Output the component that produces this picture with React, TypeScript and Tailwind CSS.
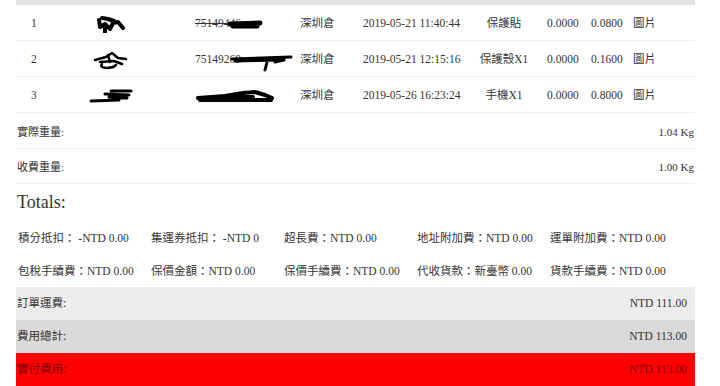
import React from 'react'

const font = { fontFamily: '"Liberation Serif", "Noto Sans CJK TC", serif' }

function Scribble({ d, w, h, sw = 4 }: { d: string; w: number; h: number; sw?: number }) {
  return (
    <svg width={w} height={h} viewBox={`0 0 ${w} ${h}`} className="block">
      <path d={d} fill="none" stroke="#000" strokeWidth={sw} strokeLinecap="round" strokeLinejoin="round" />
    </svg>
  )
}

const rows = [
  {
    no: '1',
    name: <Scribble w={30} h={18} d="M3 5 L4 12 L9 9 L14 14 L17 8 L22 7 L27 13 M6 3 L12 4 L18 6 M9 10 L9 17" />,
    track: (
      <div className="flex items-center">
        <span className="line-through">75149446</span>
        <div className="-ml-[14px]">
          <Scribble w={36} h={12} sw={5} d="M3 6 L33 5 M6 8 L30 8" />
        </div>
      </div>
    ),
    date: '2019-05-21 11:40:44',
    product: '保護貼',
    w1: '0.0000',
    w2: '0.0800',
  },
  {
    no: '2',
    name: <Scribble w={38} h={20} sw={2.5} d="M3 10 L14 7 L20 3 L26 8 L34 9 M8 12 L22 11 L30 14 M10 14 C6 19 20 19 24 15 M16 5 L18 12" />,
    track: (
      <div className="flex items-center">
        <span>75149269</span>
        <div className="-ml-[12px] mt-[6px]">
          <Scribble w={66} h={18} sw={3} d="M3 5 L62 3 M6 7 L55 6 L46 8 M38 8 L36 16" />
        </div>
      </div>
    ),
    date: '2019-05-21 12:15:16',
    product: '保護殼X1',
    w1: '0.0000',
    w2: '0.1600',
  },
  {
    no: '3',
    name: <Scribble w={44} h={16} sw={3} d="M22 3 L42 3 M16 6 L40 7 M20 9 L38 10 M2 13 L30 12" />,
    track: (
      <div className="flex items-center">
        <Scribble w={80} h={14} sw={4} d="M3 9 L30 7 L48 4 L60 3 L70 6 L77 9 M5 11 L76 11 M30 7 L58 8" />
      </div>
    ),
    date: '2019-05-26 16:23:24',
    product: '手機X1',
    w1: '0.0000',
    w2: '0.8000',
  },
]

const fees = [
  '積分抵扣： -NTD 0.00',
  '集運券抵扣： -NTD 0',
  '超長費：NTD 0.00',
  '地址附加費：NTD 0.00',
  '運單附加費：NTD 0.00',
  '包稅手續費：NTD 0.00',
  '保價金額：NTD 0.00',
  '保價手續費：NTD 0.00',
  '代收貨款：新臺幣 0.00',
  '貨款手續費：NTD 0.00',
]

export default function App() {
  return (
    <div className="w-[720px] h-[386px] overflow-hidden bg-white text-[#333] text-[11.5px]" style={font}>
      <div className="ml-4 w-[679px]">
        <div className="h-[5px] bg-[#e4e4e4]" />
        {rows.map((r) => (
          <div key={r.no} className="flex h-[36px] items-center border-b border-[#eeeeee] pt-[2px]">
            <div className="w-[50px] pl-[15px]">{r.no}</div>
            <div className="w-[129px] flex justify-center pr-[40px]">{r.name}</div>
            <div className="w-[105px]">{r.track}</div>
            <div className="w-[63px]">深圳倉</div>
            <div className="w-[107px]">{r.date}</div>
            <div className="w-[68px] text-center">{r.product}</div>
            <div className="w-[53px] pl-[9px]">{r.w1}</div>
            <div className="w-[42px]">{r.w2}</div>
            <div className="flex-1">圖片</div>
          </div>
        ))}
        <div className="flex h-[36px] items-center justify-between border-b border-[#eeeeee] pl-px pr-px pt-[3px] text-[11px]">
          <span>實際重量:</span>
          <span>1.04 Kg</span>
        </div>
        <div className="flex h-[35px] items-center justify-between border-b border-[#eeeeee] pl-px pr-px pt-[2px] text-[11px]">
          <span>收費重量:</span>
          <span>1.00 Kg</span>
        </div>
        <div className="flex h-[37px] items-center pl-px text-[18px]">Totals:</div>
        <div className="grid grid-cols-[repeat(5,133px)]">
          {fees.map((f) => (
            <div key={f} className="flex h-[33px] items-center pl-[2px] pt-[3px] whitespace-nowrap">
              {f}
            </div>
          ))}
        </div>
        <div className="flex h-[33px] items-center justify-between bg-[#ececec] pl-px pr-[8px]">
          <span>訂單運費:</span>
          <span>NTD 111.00</span>
        </div>
        <div className="flex h-[33px] items-center justify-between bg-[#dadada] pl-px pr-[8px]">
          <span>費用總計:</span>
          <span>NTD 113.00</span>
        </div>
        <div className="flex h-[33px] items-center justify-between bg-[#ff0000] pl-px pr-[8px] text-[#7a0000]">
          <span>實付費用:</span>
          <span>NTD 113.00</span>
        </div>
      </div>
    </div>
  )
}
